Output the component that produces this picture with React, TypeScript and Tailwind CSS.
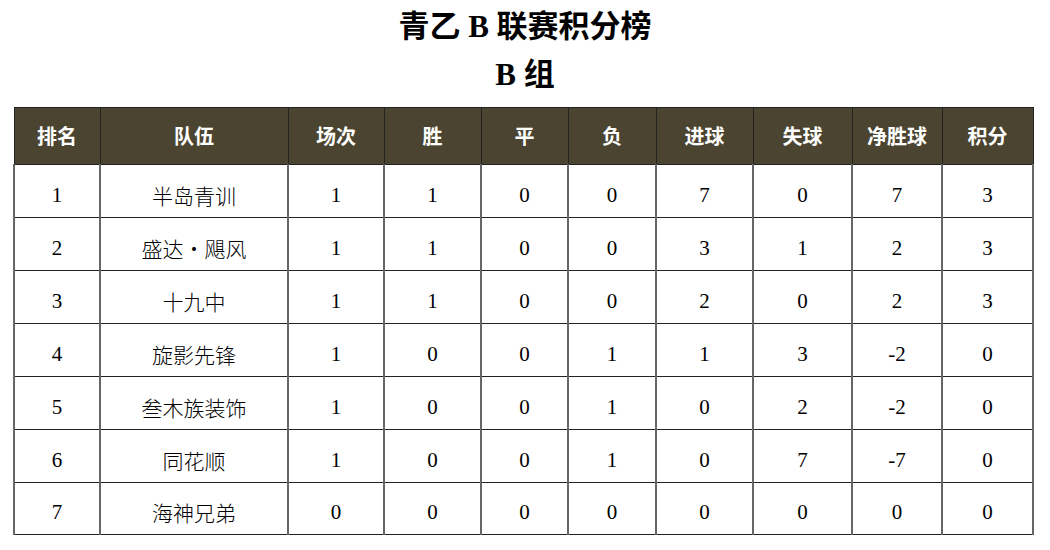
import type { JSX } from 'react';

const cols = [
  { label: '排名', w: 'w-[86px]' },
  { label: '队伍', w: 'w-[188px]' },
  { label: '场次', w: 'w-[96px]' },
  { label: '胜', w: 'w-[97px]' },
  { label: '平', w: 'w-[87px]' },
  { label: '负', w: 'w-[88px]' },
  { label: '进球', w: 'w-[97px]' },
  { label: '失球', w: 'w-[99px]' },
  { label: '净胜球', w: 'w-[90px]' },
  { label: '积分', w: 'w-[91px]' },
];

const rows: (string | number)[][] = [
  [1, '半岛青训', 1, 1, 0, 0, 7, 0, 7, 3],
  [2, '盛达・飓风', 1, 1, 0, 0, 3, 1, 2, 3],
  [3, '十九中', 1, 1, 0, 0, 2, 0, 2, 3],
  [4, '旋影先锋', 1, 0, 0, 1, 1, 3, -2, 0],
  [5, '叁木族装饰', 1, 0, 0, 1, 0, 2, -2, 0],
  [6, '同花顺', 1, 0, 0, 1, 0, 7, -7, 0],
  [7, '海神兄弟', 0, 0, 0, 0, 0, 0, 0, 0],
];

const serif = "font-['Liberation_Serif','Noto_Sans_CJK_SC',serif]";

export default function App(): JSX.Element {
  return (
    <div className="w-[1050px] h-[550px] bg-white overflow-hidden">
      <div className={`pt-[3px] text-center text-[31px] leading-[48px] font-bold text-black ${serif}`}>
        <div>青乙 B 联赛积分榜</div>
        <div>B 组</div>
      </div>
      <table className="mt-[8px] ml-[13px] w-[1019px] table-fixed border-collapse">
        <thead>
          <tr className="h-[57px] bg-[#4a4430]">
            {cols.map((c) => (
              <th
                key={c.label}
                className={`${c.w} border border-[#222] p-0 text-center text-[20px] font-bold text-white font-['Noto_Sans_CJK_SC',sans-serif]`}
              >
                {c.label}
              </th>
            ))}
          </tr>
        </thead>
        <tbody>
          {rows.map((r, i) => (
            <tr key={i} className={i === rows.length - 1 ? 'h-[52px]' : 'h-[53px]'}>
              {r.map((v, j) => (
                <td
                  key={j}
                  className={
                    'border-y border-y-[#222] border-x-2 border-x-[#666] p-0 pt-[9px] text-center text-black ' +
                    (j === 1
                      ? "text-[21px] font-['Noto_Sans_CJK_SC',sans-serif] font-light"
                      : `text-[21px] ${serif}`)
                  }
                >
                  {v}
                </td>
              ))}
            </tr>
          ))}
        </tbody>
      </table>
    </div>
  );
}
